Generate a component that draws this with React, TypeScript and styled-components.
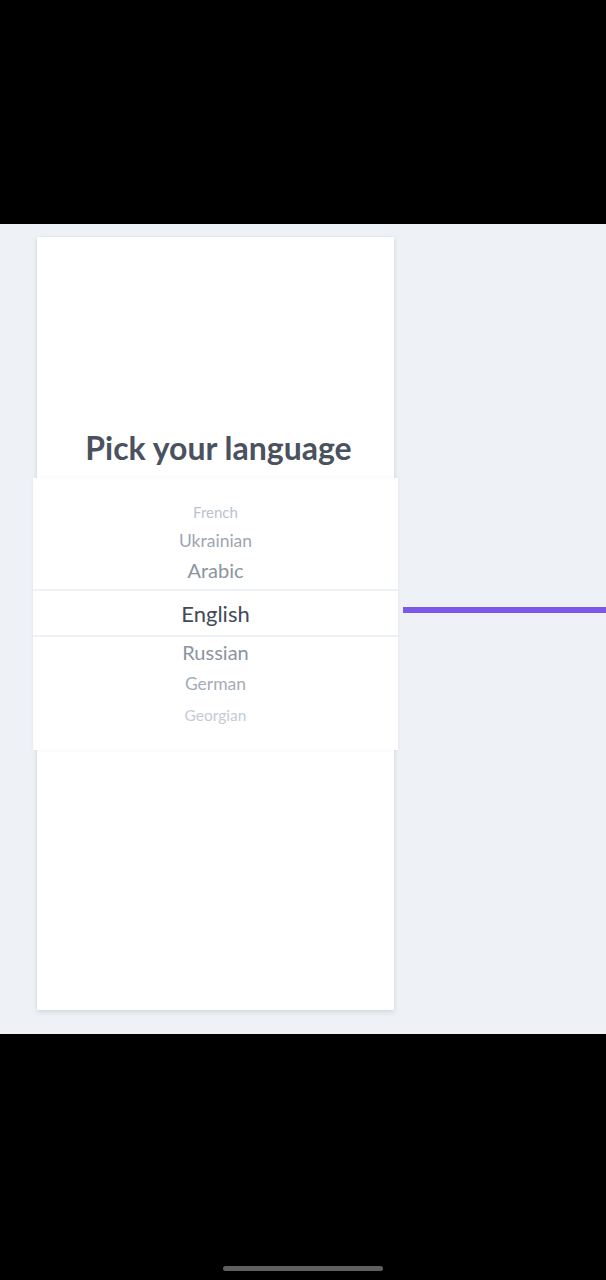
import styled, { createGlobalStyle } from 'styled-components';

const GlobalStyle = createGlobalStyle`
  html, body {
    margin: 0;
    padding: 0;
    background: #000;
  }
  * {
    box-sizing: border-box;
  }
`;

type Lang = {
  name: string;
  size: number;
  color: string;
  height: number;
};

const above: Lang[] = [
  { name: 'French', size: 15, color: '#b9c3cd', height: 28 },
  { name: 'Ukrainian', size: 17.5, color: '#9ca6b2', height: 28 },
  { name: 'Arabic', size: 20, color: '#8b94a0', height: 32 },
];

const below: Lang[] = [
  { name: 'Russian', size: 20, color: '#8b94a0', height: 29 },
  { name: 'German', size: 17.5, color: '#a3adb8', height: 35 },
  { name: 'Georgian', size: 15.5, color: '#c3ccd5', height: 27 },
];

export default function App() {
  return (
    <Screen>
      <GlobalStyle />
      <StatusArea />
      <Stage>
        <Card>
          <Title>Pick your language</Title>
          <Picker>
            <Group $pad="20px 0 3px">
              {above.map((lang) => (
                <Option key={lang.name} $size={lang.size} $color={lang.color} $height={lang.height}>
                  {lang.name}
                </Option>
              ))}
            </Group>
            <Selected>English</Selected>
            <Group $pad="0 0 22px">
              {below.map((lang) => (
                <Option key={lang.name} $size={lang.size} $color={lang.color} $height={lang.height}>
                  {lang.name}
                </Option>
              ))}
            </Group>
          </Picker>
        </Card>
        <Track>
          <Bar />
        </Track>
      </Stage>
      <NavArea>
        <HomeIndicator />
      </NavArea>
    </Screen>
  );
}

const Screen = styled.div`
  width: 606px;
  height: 1280px;
  display: flex;
  flex-direction: column;
  background: #000;
  overflow: hidden;
`;

const StatusArea = styled.div`
  height: 224px;
  background: #000;
`;

const Stage = styled.div`
  height: 810px;
  display: flex;
  align-items: flex-start;
  background: #eef1f6;
`;

const Card = styled.div`
  width: 357px;
  height: 773px;
  margin: 13px 0 0 37px;
  padding-top: 193px;
  display: flex;
  flex-direction: column;
  align-items: stretch;
  background: #fff;
  box-shadow: 0 2px 5px rgba(90, 110, 100, 0.18), 0 0 2px rgba(0, 0, 0, 0.04);
`;

const Title = styled.h1`
  margin: 0 0 12px 6px;
  font-family: Lato, 'Liberation Sans', sans-serif;
  font-size: 32px;
  line-height: 36px;
  font-weight: 700;
  color: #4a5260;
  text-align: center;
`;

const Picker = styled.div`
  margin: 0 -4px;
  display: flex;
  flex-direction: column;
  background: #fff;
  box-shadow: 0 0 4px rgba(120, 140, 160, 0.08);
`;

const Group = styled.div<{ $pad: string }>`
  display: flex;
  flex-direction: column;
  padding: ${(p) => p.$pad};
`;

const Option = styled.div<{ $size: number; $color: string; $height: number }>`
  height: ${(p) => p.$height}px;
  display: flex;
  align-items: center;
  justify-content: center;
  font-family: Lato, 'Liberation Sans', sans-serif;
  font-size: ${(p) => p.$size}px;
  color: ${(p) => p.$color};
`;

const Selected = styled.div`
  height: 48px;
  display: flex;
  align-items: center;
  justify-content: center;
  border-top: 2px solid #eef1f5;
  border-bottom: 2px solid #eef1f5;
  font-family: Lato, 'Liberation Sans', sans-serif;
  font-size: 22px;
  color: #424a55;
`;

const Track = styled.div`
  flex: 1;
  margin: 383px 0 0 9px;
`;

const Bar = styled.div`
  height: 6px;
  background: #7b58e5;
`;

const NavArea = styled.div`
  flex: 1;
  display: flex;
  justify-content: center;
  padding-top: 232px;
  background: #000;
`;

const HomeIndicator = styled.div`
  width: 160px;
  height: 5px;
  border-radius: 3px;
  background: #5f5f5f;
`;
